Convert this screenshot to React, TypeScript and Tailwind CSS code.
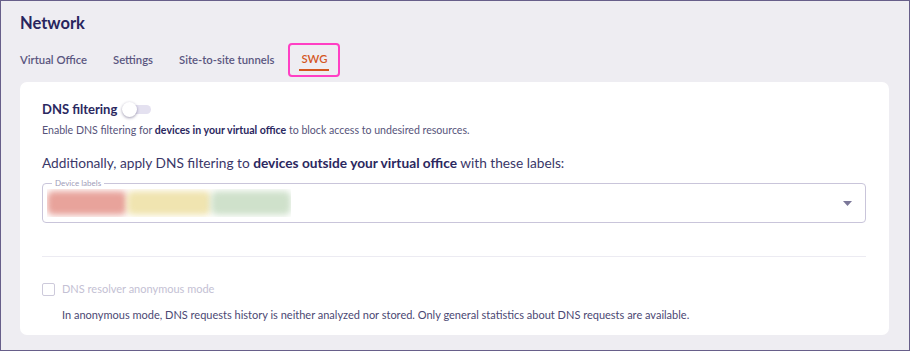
const tabs = ['Virtual Office', 'Settings', 'Site-to-site tunnels']

function Toggle() {
  return (
    <span className="relative ml-[5px] inline-flex h-[14px] w-[29px] items-center">
      <span className="absolute left-[4px] right-0 h-[9px] rounded-full bg-[#e4e1f0]" />
      <span className="absolute left-0 h-[15px] w-[15px] rounded-full bg-white shadow-[0_1px_3px_rgba(40,30,80,0.45)]" />
    </span>
  )
}

function BlurredLabels() {
  return (
    <div className="flex h-[28px] w-[244px] items-center overflow-hidden">
      <div className="h-[24px] w-[80px] rounded-[6px] bg-[#e8a39b] blur-[3px]" />
      <div className="h-[24px] w-[84px] rounded-[6px] bg-[#f0e4b0] blur-[3px]" />
      <div className="h-[24px] w-[80px] rounded-[6px] bg-[#cfe1cb] blur-[3px]" />
    </div>
  )
}

export default function App() {
  return (
    <div
      className="h-[351px] w-[910px] border border-[#675f8a] bg-[#eeedf2] text-[#2b2860]"
      style={{ fontFamily: 'Lato, "Liberation Sans", sans-serif' }}
    >
      <div className="pl-[19px] pr-[20px] pt-[11px]">
        <h1 className="text-[16.5px] font-bold leading-[22px] text-[#28255e]">Network</h1>

        <div className="mt-[9px] flex h-[34px] items-center gap-[26px] text-[11.3px] font-semibold text-[#5a5680]">
          {tabs.map((t) => (
            <span key={t}>{t}</span>
          ))}
          <div className="-ml-[12px] flex h-[34px] w-[52px] items-center justify-center rounded-[4px] border-2 border-[#ff3fc4]">
            <span className="relative pb-[4px] pt-[2px] text-[#d4561f]">
              SWG
              <span className="absolute -left-[2px] -right-[2px] bottom-0 h-[2px] bg-[#d4561f]" />
            </span>
          </div>
        </div>

        <div className="mt-[5px] rounded-[7px] bg-white pb-[12px] pl-[22px] pr-[23px] pt-[17px]">
          <div className="flex items-center">
            <span className="text-[13px] font-bold leading-[20px]">DNS filtering</span>
            <Toggle />
          </div>
          <p className="mt-[3px] text-[10.6px] leading-[16px] text-[#56537a]">
            Enable DNS filtering for <b className="font-bold text-[#2b2860]">devices in your virtual office</b> to block access to undesired resources.
          </p>

          <p className="mt-[15px] text-[13.7px] leading-[20px] text-[#3a3768]">
            Additionally, apply DNS filtering to <b className="font-bold text-[#2b2860]">devices outside your virtual office</b> with these labels:
          </p>

          <div className="relative mt-[10px] flex h-[40px] items-center justify-between rounded-[4px] border border-[#c9c5da] pl-[4px] pr-[13px]">
            <span className="absolute -top-[6px] left-[9px] bg-white px-[3px] text-[8px] leading-[10px] text-[#a09cb8]">
              Device labels
            </span>
            <BlurredLabels />
            <svg width="9" height="5" viewBox="0 0 9 5" className="fill-[#7b7799]">
              <path d="M0 0h9L4.5 5z" />
            </svg>
          </div>

          <div className="mt-[33px] h-px bg-[#ecebf2]" />

          <label className="mt-[25px] flex items-center gap-[7px]">
            <span className="h-[13px] w-[13px] rounded-[2px] border border-[#cdcadb]" />
            <span className="text-[11px] leading-[14px] text-[#c4c1d4]">DNS resolver anonymous mode</span>
          </label>
          <p className="mt-[11px] pl-[20px] text-[11px] leading-[16px] text-[#4b4873]">
            In anonymous mode, DNS requests history is neither analyzed nor stored. Only general statistics about DNS requests are available.
          </p>
        </div>
      </div>
    </div>
  )
}
